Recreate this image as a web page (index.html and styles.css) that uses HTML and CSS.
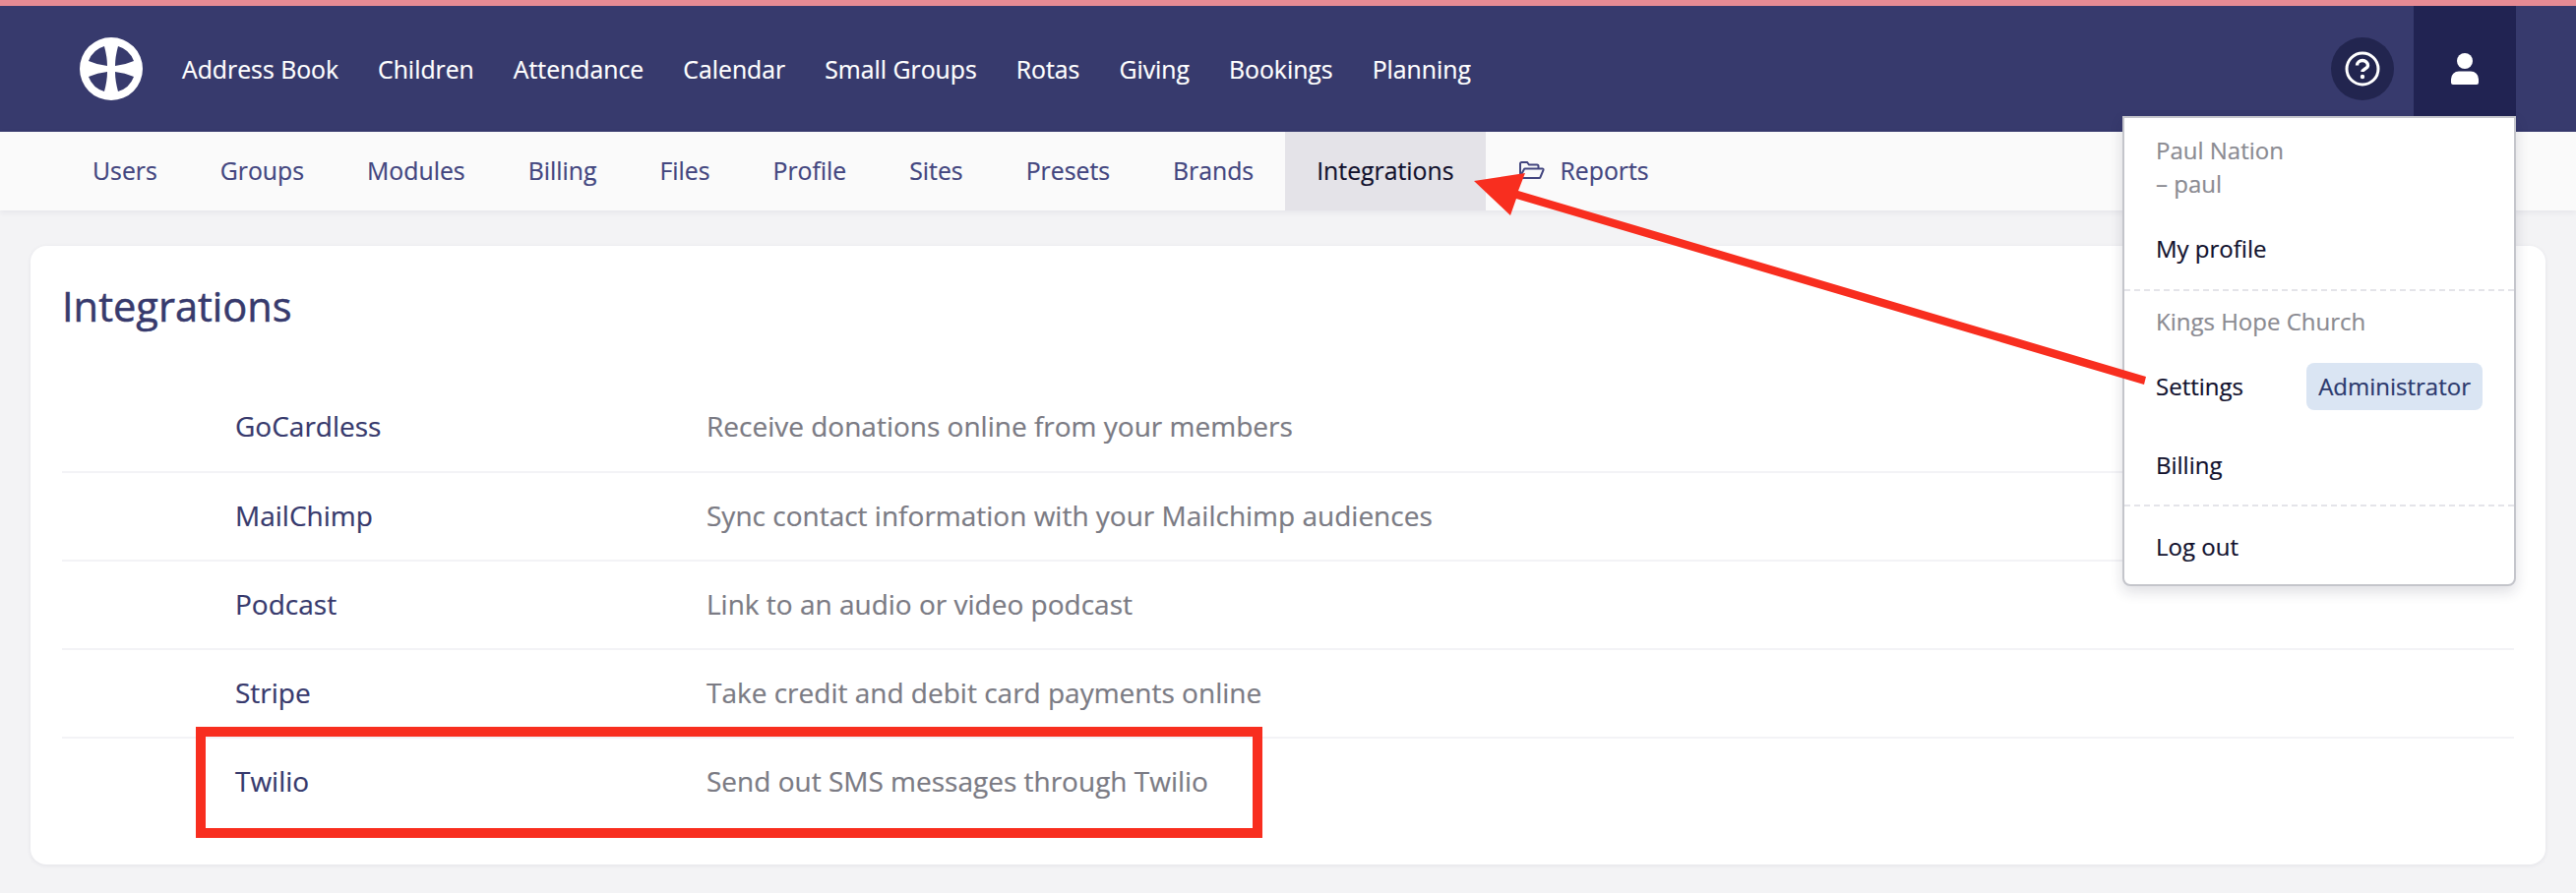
FILE: index.html
```html
<!DOCTYPE html>
<html lang="en">
<head>
<meta charset="utf-8">
<title>Integrations</title>
<link rel="stylesheet" href="styles.css">
</head>
<body>
<header class="topbar">
  <a class="logo" href="#">
    <svg viewBox="-32 -32 64 64" width="64" height="64"><path fill="#fff" fill-rule="evenodd" d="M0-32A32 32 0 1 1 0 32A32 32 0 1 1 0-32ZM-23-8A24.500 24.500 0 0 1-7-23Q-4-12-4-3Q-14-4-23-8ZM23-8A24.500 24.500 0 0 0 7-23Q4-12 4-3Q14-4 23-8ZM-23 8A24.500 24.500 0 0 0-7 23Q-4 12-4 3Q-14 4-23 8ZM23 8A24.500 24.500 0 0 1 7 23Q4 12 4 3Q14 4 23 8Z"/></svg>
  </a>
  <nav class="mainnav">
    <a href="#">Address Book</a>
    <a href="#">Children</a>
    <a href="#">Attendance</a>
    <a href="#">Calendar</a>
    <a href="#">Small Groups</a>
    <a href="#">Rotas</a>
    <a href="#">Giving</a>
    <a href="#">Bookings</a>
    <a href="#">Planning</a>
  </nav>
  <div class="tools">
    <a class="help" href="#">
      <svg viewBox="0 0 36 36" width="36" height="36"><circle cx="18" cy="18" r="16" fill="none" stroke="#fff" stroke-width="3"/><path d="M12.500 14.500a5.500 5 0 0 1 11 0c0 3.500-5.500 3.500-5.500 6.500" fill="none" stroke="#fff" stroke-width="3.400"/><circle cx="18" cy="26" r="2.200" fill="#fff"/></svg>
    </a>
    <a class="user" href="#">
      <svg viewBox="0 0 28 32" width="28" height="32"><circle cx="14" cy="8" r="8" fill="#fff"/><path fill="#fff" d="M8 18.500h12a8 8 0 0 1 8 8V30a2 2 0 0 1-2 2H2a2 2 0 0 1-2-2v-3.500a8 8 0 0 1 8-8Z"/></svg>
    </a>
  </div>
</header>

<nav class="subnav">
  <a href="#">Users</a>
  <a href="#">Groups</a>
  <a href="#">Modules</a>
  <a href="#">Billing</a>
  <a href="#">Files</a>
  <a href="#">Profile</a>
  <a href="#">Sites</a>
  <a href="#">Presets</a>
  <a href="#">Brands</a>
  <a class="active" href="#">Integrations</a>
  <a class="folder" href="#">
    <svg viewBox="0 0 28 18" width="28" height="18"><path fill="none" stroke="currentColor" stroke-width="2" d="M3 15V2.500A1.500 1.500 0 0 1 4.500 1H10l2 2.500h8a1.500 1.500 0 0 1 1.500 1.500v2.500M3 15.500 7 8a1 1 0 0 1 1-.500h17.500a1 1 0 0 1 1 1.300L23.500 16a1 1 0 0 1-1 1H4a1 1 0 0 1-1-1.500Z"/></svg>
    Reports
  </a>
</nav>

<main class="content">
  <section class="card">
    <h1>Integrations</h1>
    <ul class="list">
      <li><a href="#">GoCardless</a><span>Receive donations online from your members</span></li>
      <li><a href="#">MailChimp</a><span>Sync contact information with your Mailchimp audiences</span></li>
      <li><a href="#">Podcast</a><span>Link to an audio or video podcast</span></li>
      <li><a href="#">Stripe</a><span>Take credit and debit card payments online</span></li>
      <li><a href="#">Twilio</a><span>Send out SMS messages through Twilio</span></li>
    </ul>
  </section>
</main>

<div class="menu">
  <div class="menu-section">
    <div class="muted who">Paul Nation<br>– paul</div>
    <a class="item" href="#">My profile</a>
  </div>
  <div class="menu-section">
    <div class="muted org">Kings Hope Church</div>
    <a class="item" href="#">Settings <span class="badge">Administrator</span></a>
    <a class="item" href="#">Billing</a>
  </div>
  <div class="menu-section">
    <a class="item" href="#">Log out</a>
  </div>
</div>

<div class="redbox"></div>
<svg class="arrow" viewBox="0 0 2618 908" width="2618" height="908">
  <path fill="#f82e1f" d="M1498 184 1550 176 1543 194 2181 383 2179 391 1541 202 1535 219Z"/>
</svg>
</body>
</html>
```

FILE: styles.css
```css
* { box-sizing: border-box; }
html, body { margin: 0; height: 100%; }
body {
  background: #f3f3f5;
  font-family: "Open Sans", "Noto Sans", sans-serif;
  font-size: 24px;
  line-height: 34px;
  overflow: hidden;
  color: #12122e;
  -webkit-text-stroke: .2px;
}
a { text-decoration: none; color: inherit; }

.topbar {
  display: flex;
  align-items: center;
  height: 134px;
  padding-left: 81px;
  background: #373a6d;
  border-top: 6px solid #e68b94;
  color: #fff;
  font-size: 24.8px;
}
.logo { display: flex; margin-right: 40px; }
.mainnav { display: flex; gap: 40px; }
.tools { display: flex; align-items: center; margin-left: auto; margin-right: 61px; align-self: stretch; }
.help {
  display: flex;
  align-items: center;
  justify-content: center;
  width: 64px;
  height: 64px;
  margin-right: 20px;
  border-radius: 50%;
  background: #22254f;
}
.user {
  display: flex;
  justify-content: center;
  width: 104px;
  padding-top: 48px;
  align-self: stretch;
  background: #212352;
}

.subnav {
  display: flex;
  height: 80px;
  padding-left: 62px;
  background: #fafafa;
  box-shadow: 0 2px 6px rgba(40, 40, 80, .07);
  color: #43467f;
  font-size: 24.8px;
}
.subnav a {
  display: flex;
  align-items: center;
  padding: 0 32px 2px;
}
.subnav .active { background: #e4e3e8; color: #12122e; }
.subnav .folder { gap: 16px; padding-left: 32px; }

.content { padding: 36px 31px 0; }
.card {
  height: 629px;
  padding: 0 32px;
  background: #fff;
  border-radius: 16px;
  box-shadow: 0 1px 4px rgba(40, 40, 80, .08);
}
h1 {
  margin: 0;
  padding-top: 34px;
  height: 139px;
  font-size: 41.6px;
  line-height: 54px;
  font-weight: 400;
  -webkit-text-stroke: .5px;
  color: #373a6d;
}
.list { margin: 0; padding: 0; list-style: none; font-size: 28px; }
.list li {
  display: flex;
  align-items: center;
  height: 90px;
  padding: 0 0 2px 176px;
  border-top: 2px solid #f3f3f6;
}
.list li:first-child { border-top: 0; height: 90px; }
.list a { width: 479px; color: #373a6d; }
.list span { color: #7b7b84; }

.menu {
  position: absolute;
  left: 2157px;
  top: 118px;
  width: 400px;
  height: 478px;
  background: #fff;
  border: 2px solid #c4c5cb;
  border-radius: 0 0 8px 8px;
  box-shadow: 0 6px 14px rgba(30, 30, 60, .14);
}
.menu-section { padding: 0 32px; }
.menu-section + .menu-section { border-top: 2px dashed #e4e4e9; }
.muted { color: #8b8b92; }
.who { padding-top: 16px; height: 92px; }
.org { padding-top: 14px; height: 57px; }
.item { display: flex; align-items: center; justify-content: space-between; height: 80px; }
.menu-section:first-child .item, .menu-section:last-child .item { height: 82px; }
.badge {
  padding: 7px 12px;
  height: 48px;
  background: #dae5f3;
  border-radius: 8px;
  color: #2c3a6e;
}

.redbox {
  position: absolute;
  left: 199px;
  top: 739px;
  width: 1084px;
  height: 113px;
  border: 10px solid #f82e1f;
}
.arrow { position: absolute; left: 0; top: 0; pointer-events: none; }
```
